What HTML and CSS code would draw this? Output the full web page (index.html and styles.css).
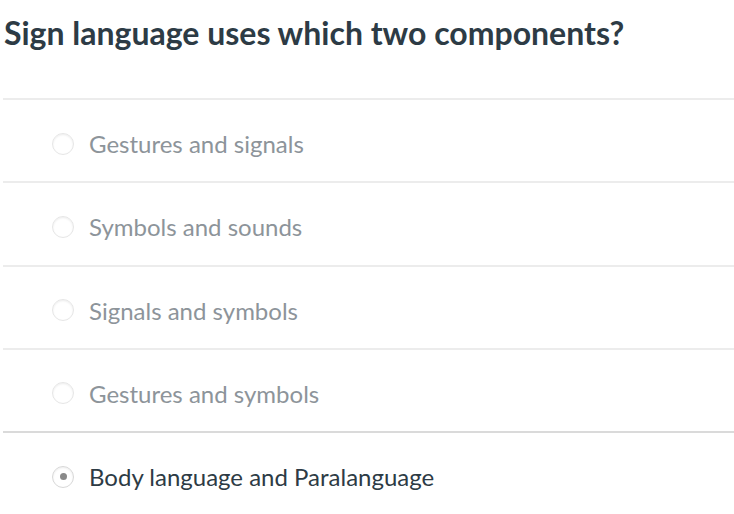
FILE: index.html
```html
<!DOCTYPE html>
<html>
<head>
<meta charset="utf-8">
<link rel="stylesheet" href="styles.css">
</head>
<body>
<div class="question">
  <h1 class="title">Sign language uses which two components?</h1>
  <ul class="answers">
    <li class="answer"><span class="radio"></span><span class="label">Gestures and signals</span></li>
    <li class="answer"><span class="radio"></span><span class="label">Symbols and sounds</span></li>
    <li class="answer"><span class="radio"></span><span class="label">Signals and symbols</span></li>
    <li class="answer"><span class="radio"></span><span class="label">Gestures and symbols</span></li>
    <li class="answer selected"><span class="radio"></span><span class="label">Body language and Paralanguage</span></li>
  </ul>
</div>
</body>
</html>
```
FILE: styles.css
```css
html, body {
  margin: 0;
  padding: 0;
  background: #ffffff;
}
body {
  font-family: Lato, "Open Sans", sans-serif;
}
.question {
  padding-left: 3px;
}
.title {
  margin: 0;
  padding: 14px 0 0 1px;
  height: 98px;
  box-sizing: border-box;
  font-size: 32px;
  line-height: 38px;
  font-weight: 700;
  color: #2d3b45;
}
.answers {
  list-style: none;
  margin: 0;
  padding: 0;
}
.answer {
  display: flex;
  align-items: center;
  gap: 15px;
  height: 83.25px;
  box-sizing: border-box;
  border-top: 2px solid #ececec;
  padding: 6px 0 0 49px;
  font-size: 24px;
  color: #8d949a;
}
.answer.selected {
  border-top-color: #dadada;
  color: #2d3b45;
}
.radio {
  width: 20px;
  height: 20px;
  border-radius: 50%;
  border: 1px solid #e6e6e6;
  box-shadow: inset 0 1px 2px rgba(0,0,0,0.07);
  flex: none;
  display: flex;
  align-items: center;
  justify-content: center;
}
.selected .radio {
  border-color: #d8d8d8;
}
.selected .radio::after {
  content: "";
  width: 7px;
  height: 7px;
  border-radius: 50%;
  background: #8a8a8a;
}
```
